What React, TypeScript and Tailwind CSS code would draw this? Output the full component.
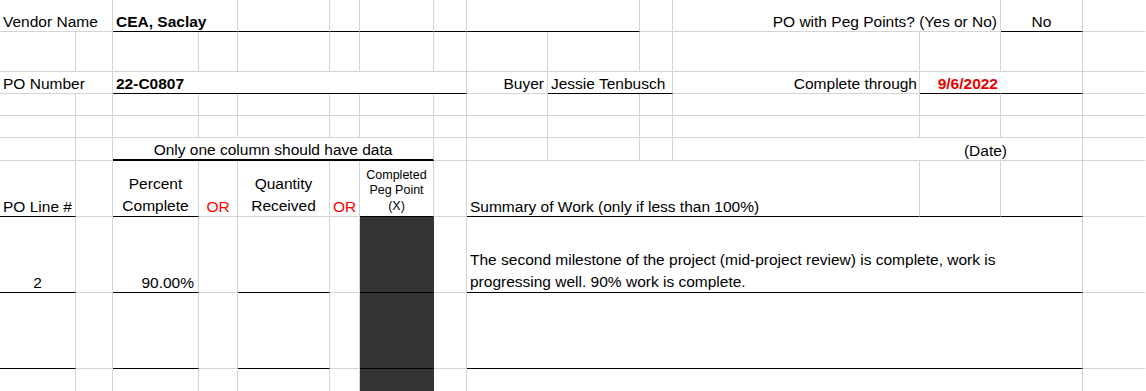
import type { ReactNode } from 'react'
import clsx from 'clsx'

const SPAN: Record<number, string> = {
  1: '',
  2: 'col-span-2',
  3: 'col-span-3',
  4: 'col-span-4',
  5: 'col-span-5',
  6: 'col-span-6',
}

interface CellProps {
  readonly span?: number
  readonly ul?: boolean | 'thick'
  readonly noR?: boolean
  readonly dark?: boolean
  readonly className?: string
  readonly children?: ReactNode
}

function Cell({ span = 1, ul, noR, dark, className, children }: CellProps) {
  return (
    <div
      className={clsx(
        'flex min-w-0 items-end whitespace-nowrap border-r',
        SPAN[span],
        dark ? 'border-r-[#333333] bg-[#333333]' : noR ? 'border-r-transparent' : 'border-r-[#d4d4d4]',
        ul === 'thick' ? 'border-b-2 border-b-black' : ul ? 'border-b border-b-black' : 'border-b border-b-[#d4d4d4]',
        className,
      )}
    >
      {children}
    </div>
  )
}

function EmptyRow() {
  return (
    <>
      {Array.from({ length: 14 }, (_, i) => (
        <Cell key={i} />
      ))}
      <Cell noR />
    </>
  )
}

function LineRow({ line, pct, summary }: { line?: string; pct?: string; summary?: ReactNode }) {
  return (
    <>
      <Cell ul className="justify-center">{line}</Cell>
      <Cell />
      <Cell ul className="justify-end pr-[4px]">{pct}</Cell>
      <Cell />
      <Cell ul />
      <Cell />
      <Cell dark ul />
      <Cell />
      <Cell span={6} ul className="pl-[3px]">{summary}</Cell>
      <Cell noR />
    </>
  )
}

export default function App() {
  return (
    <div className="h-[391px] overflow-hidden bg-white font-['Liberation_Sans',Arial,sans-serif] text-[15.5px] leading-[18px] text-black">
      <div className="grid grid-cols-[76px_37px_86px_39px_92px_30px_74px_33px_81px_92px_33px_247px_81px_82px_63px] grid-rows-[32px_40px_22px_22px_22px_23px_56px_76px_76px_23px]">
        {/* vendor row */}
        <Cell span={2} className="pl-[3px]">Vendor Name</Cell>
        <Cell span={2} ul className="pl-[3px] font-bold">CEA, Saclay</Cell>
        <Cell ul />
        <Cell ul />
        <Cell ul />
        <Cell ul />
        <Cell span={2} ul />
        <Cell />
        <Cell span={2} className="justify-end pr-[3px]">PO with Peg Points? (Yes or No)</Cell>
        <Cell ul className="justify-center">No</Cell>
        <Cell noR />

        <EmptyRow />

        {/* po number row */}
        <Cell span={2} className="pl-[3px]">PO Number</Cell>
        <Cell span={6} ul className="pl-[3px] font-bold">22-C0807</Cell>
        <Cell className="justify-end pr-[3px]">Buyer</Cell>
        <Cell span={2} ul className="pl-[3px]">Jessie Tenbusch</Cell>
        <Cell className="justify-end pr-[2px]">Complete through</Cell>
        <Cell ul noR className="justify-end pr-[2px] font-bold text-[#e60000]">9/6/2022</Cell>
        <Cell ul />
        <Cell noR />

        <EmptyRow />
        <EmptyRow />

        {/* column note */}
        <Cell />
        <Cell />
        <Cell span={5} ul="thick" className="justify-center">Only one column should have data</Cell>
        <Cell />
        <Cell />
        <Cell />
        <Cell />
        <Cell span={3} className="justify-end pr-[75px]">(Date)</Cell>
        <Cell noR />

        {/* header */}
        <Cell ul className="pl-[3px]">PO Line #</Cell>
        <Cell />
        <Cell ul className="justify-center text-center">
          <div className="translate-y-[1px] leading-[22px]">Percent<br />Complete</div>
        </Cell>
        <Cell className="justify-center text-[#ff0000]">OR</Cell>
        <Cell className="justify-center text-center">
          <div className="translate-y-[1px] leading-[22px]">Quantity<br />Received</div>
        </Cell>
        <Cell className="justify-center text-[#ff0000]">OR</Cell>
        <Cell ul className="justify-center text-center">
          <div className="pb-[2px] text-[12.5px] leading-[15.5px]">Completed<br />Peg Point<br />(X)</div>
        </Cell>
        <Cell />
        <Cell span={4} ul className="pl-[3px]">Summary of Work (only if less than 100%)</Cell>
        <Cell ul />
        <Cell ul />
        <Cell noR />

        <LineRow
          line="2"
          pct="90.00%"
          summary={
            <div className="translate-y-[1px] leading-[22px]">
              The second milestone of the project (mid-project review) is complete, work is
              <br />
              progressing well. 90% work is complete.
            </div>
          }
        />
        <LineRow />
        <LineRow />
      </div>
    </div>
  )
}
